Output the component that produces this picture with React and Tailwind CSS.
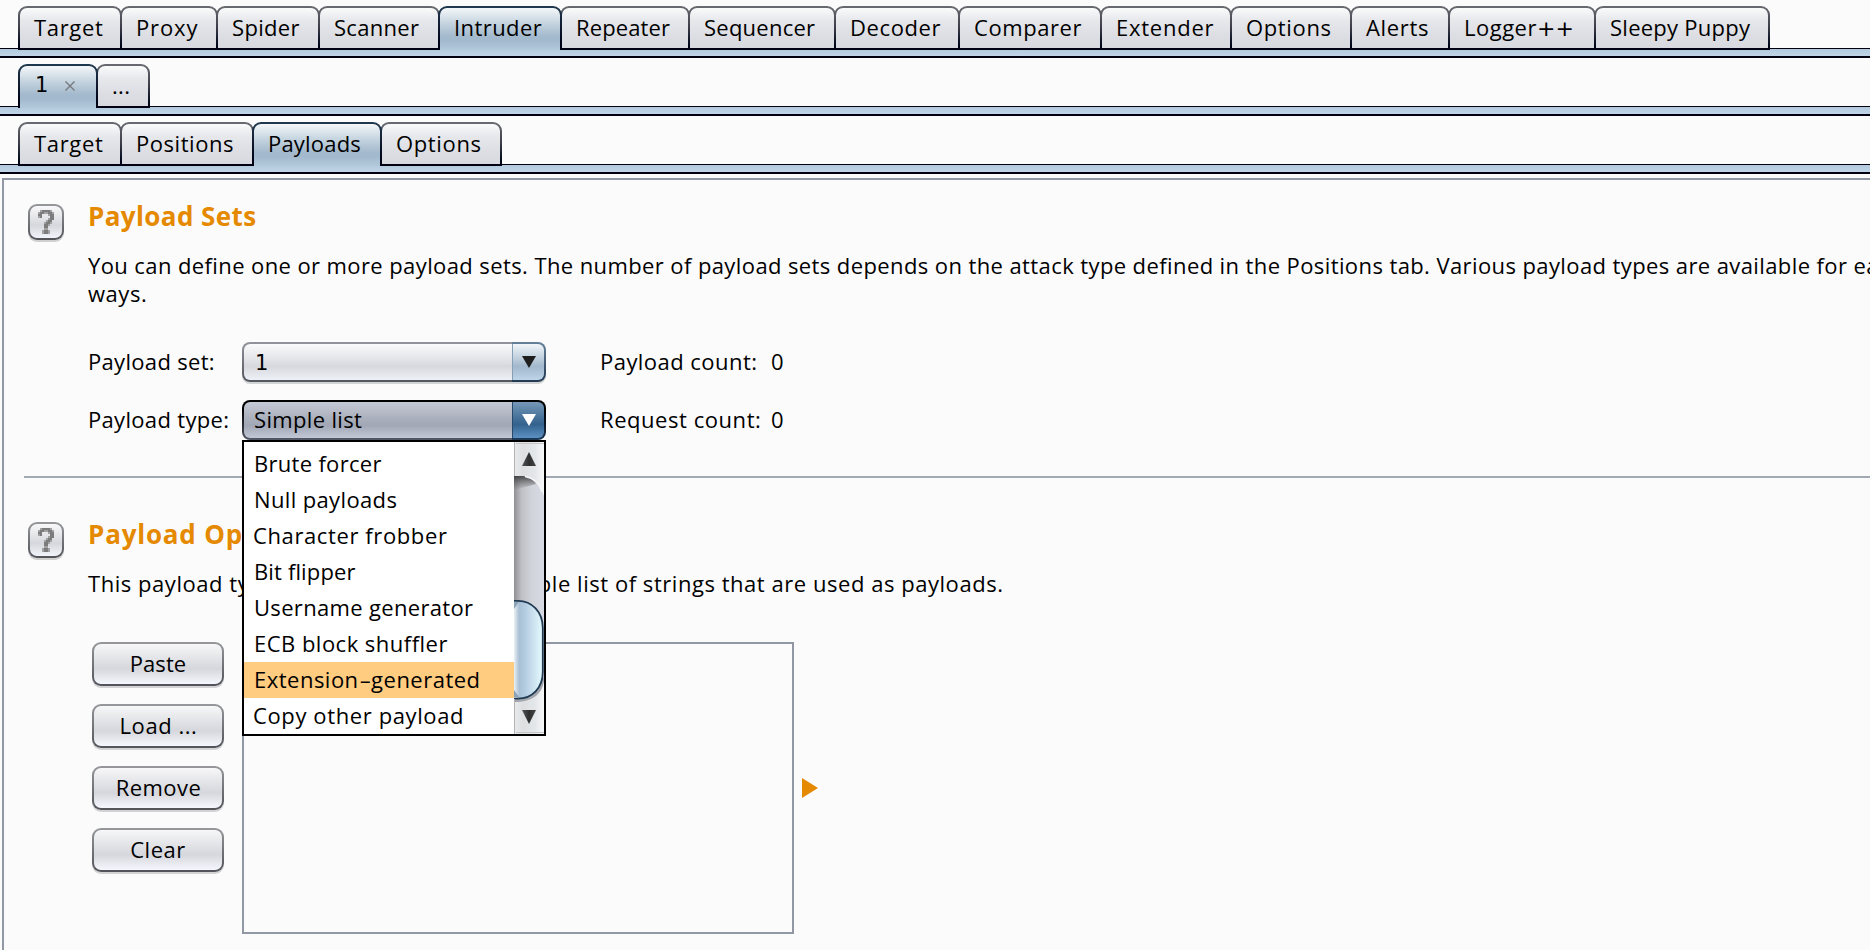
import { clsx } from "clsx";

const mainTabs = [
  { label: "Target", cls: "w-[104px] tracking-[0.67px]" },
  { label: "Proxy", cls: "w-[98px] tracking-[0.88px]" },
  { label: "Spider", cls: "w-[104px] tracking-[0.32px]" },
  { label: "Scanner", cls: "w-[122px] tracking-[0.31px]" },
  { label: "Intruder", cls: "w-[124px] tracking-[0.43px]", active: true },
  { label: "Repeater", cls: "w-[130px] tracking-[0.12px]" },
  { label: "Sequencer", cls: "w-[148px] tracking-[0.24px]" },
  { label: "Decoder", cls: "w-[126px] tracking-[0.6px]" },
  { label: "Comparer", cls: "w-[144px] tracking-[0.57px]" },
  { label: "Extender", cls: "w-[132px] tracking-[0.75px]" },
  { label: "Options", cls: "w-[122px] tracking-[0.65px]" },
  { label: "Alerts", cls: "w-[100px] tracking-[0.67px]" },
  {
    label: (
      <>
        Logger<span className="font-['DejaVu_Sans',sans-serif] tracking-normal">++</span>
      </>
    ),
    cls: "w-[148px] tracking-[0.5px]",
  },
  { label: "Sleepy Puppy", cls: "w-[176px] tracking-[0.26px]" },
];

const attackTabs = [
  {
    label: (
      <span className="flex items-center gap-[17px] pl-[1px]">
        <One />
        <svg className="mt-[2px] h-[10px] w-[10px]" viewBox="0 0 10 10">
          <path d="M0.5 0.5L9.5 9.5M9.5 0.5L0.5 9.5" stroke="#77797c" strokeWidth="1.4" />
        </svg>
      </span>
    ),
    cls: "w-[80px]",
    active: true,
  },
  { label: "...", cls: "w-[54px] tracking-[0.3px]" },
];

const sectionTabs = [
  { label: "Target", cls: "w-[104px] tracking-[0.67px]" },
  { label: "Positions", cls: "w-[134px] tracking-[0.55px]" },
  { label: "Payloads", cls: "w-[130px] tracking-[0.2px]", active: true },
  { label: "Options", cls: "w-[122px] tracking-[0.65px]" },
];

const payloadTypes = [
  { label: "Brute forcer", cls: "tracking-[0.3px]" },
  { label: "Null payloads", cls: "tracking-[0.36px]" },
  { label: "Character frobber", cls: "tracking-[0.61px] -ml-px" },
  { label: "Bit flipper", cls: "tracking-[0.14px]" },
  { label: "Username generator", cls: "tracking-[0.33px]" },
  { label: "ECB block shuffler", cls: "tracking-[0.48px]" },
  {
    label: (
      <>
        Extension<span className="inline-block w-[12.5px] scale-x-[1.7] text-center tracking-normal">-</span>generated
      </>
    ),
    cls: "tracking-[0.49px]",
    active: true,
  },
  { label: "Copy other payload", cls: "tracking-[0.61px] -ml-px" },
];

const buttons = [
  { label: "Paste", cls: "tracking-[0.05px]" },
  { label: "Load ...", cls: "tracking-[0.55px] pl-px" },
  { label: "Remove", cls: "tracking-[0.4px] pl-px" },
  { label: "Clear", cls: "tracking-[0.5px]" },
];

function One() {
  return <span className="font-['DejaVu_Sans',sans-serif] text-[21px]">1</span>;
}

function TabRow({ tabs }) {
  return (
    <div className="h-[58px] pt-[6px]">
      <div className="relative z-10 flex pl-[18px]">
        {tabs.map(({ label, cls, active }, i) => (
          <div
            key={i}
            className={clsx(
              "h-[44px] shrink-0 rounded-t-[9px] px-[2px] pt-[2px] whitespace-nowrap",
              i > 0 && "-ml-[2px]",
              active
                ? "z-10 bg-linear-to-b from-[#1f3a50] via-[#10182c] to-[#00000f]"
                : "bg-linear-to-b from-[#6a6c72] via-[#3a3b46] to-[#00000f] pb-[2px]",
              cls
            )}
          >
            <div
              className={clsx(
                "h-full rounded-t-[7px] pt-[5px] pl-[14px]",
                active
                  ? "bg-[linear-gradient(#f4f7f9,#c6d5e0_35%,#a3b9cd_68%,#a3b9cd_78%,#b2c9dc)]"
                  : "bg-[linear-gradient(#fafafb,#e7e8ec_30%,#dddee3_70%,#d8d9df)]"
              )}
            >
              {label}
            </div>
          </div>
        ))}
      </div>
      <div className="-mt-[2px] h-[10px] border-t border-b-2 border-[#00000f] bg-linear-to-b from-[#b2c9dd] to-[#c0d5e7]" />
    </div>
  );
}

const questionMark = [
  ".abbbba.",
  "abbaabba",
  "bb...abb",
  "ab....bb",
  ".....abb",
  "....abb.",
  "...abba.",
  "...bba..",
  "...bb...",
  "...aa...",
  "..abba..",
  "..abba..",
];

function HelpButton() {
  return (
    <div className="h-9 w-9 shrink-0 rounded-[9px] bg-linear-to-b from-[#96989c] to-[#515359] p-[2px] shadow-[0_2px_0_#d0d0d0]">
      <div className="flex h-full justify-center rounded-[7px] bg-[linear-gradient(#f8f8f9,#dfe0e4_45%,#d5d7dc_60%,#f2f4fb)] pt-1">
        <svg className="h-6 w-4" viewBox="0 0 8 12" shapeRendering="crispEdges">
          {questionMark.flatMap((row, y) =>
            [...row].map((c, x) =>
              c === "." ? null : (
                <rect key={`${x}-${y}`} x={x} y={y} width="1" height="1" fill={c === "b" ? "#7c7c7c" : "#a2a2a4"} />
              )
            )
          )}
        </svg>
      </div>
    </div>
  );
}

function Combo({ children, open }) {
  return (
    <div className={clsx("flex h-10 w-[304px] rounded-[8px]", !open && "shadow-[0_2px_0_#d3d4d6]")}>
      <div
        className={clsx(
          "w-[270px] rounded-l-[8px] bg-linear-to-b py-[2px] pl-[2px]",
          open ? "from-black to-[#555a68]" : "from-[#93959e] to-[#54565e]"
        )}
      >
        <div
          className={clsx(
            "h-full rounded-l-[6px] pt-[3px] pl-[10px]",
            open
              ? "bg-[linear-gradient(#c6cad6,#abb0bd_45%,#a2a7b5_65%,#c2c7d5)]"
              : "bg-[linear-gradient(#fbfbfc,#e3e4e8_42%,#d6d8dd_62%,#eff1f9)]"
          )}
        >
          {children}
        </div>
      </div>
      <div
        className={clsx(
          "w-[34px] rounded-r-[8px] bg-linear-to-b py-[2px] pr-[2px]",
          open ? "from-black to-[#1e3a57]" : "from-[#66829a] to-[#233b53]"
        )}
      >
        <div
          className={clsx(
            "flex h-full justify-center rounded-r-[6px] border-l pt-3",
            open
              ? "border-[#27496b] bg-[linear-gradient(#7698b6,#47739b_42%,#33628d_62%,#5c91c3)]"
              : "border-[#86a0b6] bg-[linear-gradient(#f2f6f9,#bccddb_42%,#a2b8cc_62%,#bdd4e9)]"
          )}
        >
          <svg className="h-3 w-[14px]" viewBox="0 0 14 12">
            <path d="M0 0H14L7 12Z" fill={open ? "#fff" : "#1f1f1f"} />
          </svg>
        </div>
      </div>
    </div>
  );
}

function ScrollBar() {
  return (
    <svg className="h-[292px] w-[30px] shrink-0" viewBox="0 0 30 292">
      <defs>
        <linearGradient id="btn">
          <stop offset="0" stopColor="#e9eaeb" />
          <stop offset="0.3" stopColor="#dddfe1" />
          <stop offset="0.7" stopColor="#e4e7ea" />
          <stop offset="1" stopColor="#f6f8f9" />
        </linearGradient>
        <linearGradient id="track">
          <stop offset="0" stopColor="#8f8f94" />
          <stop offset="0.25" stopColor="#bfc0c5" />
          <stop offset="0.6" stopColor="#d2d4dc" />
          <stop offset="1" stopColor="#d8dae4" />
        </linearGradient>
        <linearGradient id="topShade" x2="0" y2="1">
          <stop offset="0" stopColor="#333" stopOpacity="0.85" />
          <stop offset="1" stopColor="#555" stopOpacity="0" />
        </linearGradient>
        <linearGradient id="thumb">
          <stop offset="0" stopColor="#dfe9f0" />
          <stop offset="0.16" stopColor="#f0f5f8" />
          <stop offset="0.32" stopColor="#a9c0d4" />
          <stop offset="0.5" stopColor="#b5cde2" />
          <stop offset="1" stopColor="#e6fbff" />
        </linearGradient>
        <linearGradient id="arrow">
          <stop offset="0" stopColor="#555" />
          <stop offset="0.5" stopColor="#2f2f2f" />
          <stop offset="1" stopColor="#444" />
        </linearGradient>
      </defs>
      <rect width="30" height="292" fill="url(#btn)" />
      <path d="M0 34H8C20 35 27 42 29 52L30 54V240H0Z" fill="url(#track)" />
      <path d="M0 34H9C15 35 20 38 22 42L0 48Z" fill="url(#topShade)" />
      <path d="M11 34.5C20 36 26 42 28 50" fill="none" stroke="#f4f5f6" strokeWidth="1.5" />
      <path d="M0 236H30C30 252 18 259 4 260H0Z" fill="#a3a7ad" />
      <path
        d="M-6 158.8H4C18 158.8 28.8 170 28.8 186V230C28.8 246 18 256.6 4 256.6H-6Z"
        fill="url(#thumb)"
        stroke="#203a52"
        strokeWidth="1.8"
      />
      <path d="M0 160H5L0 167ZM0 255H5L0 248Z" fill="#8ba3b8" />
      <path d="M0.5 0V34M0.5 257V292" stroke="#b4b4b4" />
      <path d="M2 1.5H30M2 290.5H30" stroke="#c4c6c8" />
      <path d="M15 10L22 24H8Z" fill="url(#arrow)" />
      <path d="M8 268H22L15 282Z" fill="url(#arrow)" />
    </svg>
  );
}

function Popup() {
  return (
    <div className="absolute top-10 left-0 z-20 flex h-[296px] w-[304px] border-2 border-black bg-white">
      <div className="flex-1 pt-1">
        {payloadTypes.map(({ label, cls, active }, i) => (
          <div key={i} className={clsx("h-9 pt-[3px] pl-[10px] whitespace-nowrap", active && "bg-[#ffcc80]")}>
            <div className={cls}>{label}</div>
          </div>
        ))}
      </div>
      <ScrollBar />
    </div>
  );
}

const titleCls = "text-[26px] leading-9 font-bold text-[#e58900]";

export default function App() {
  return (
    <div className="flex h-[950px] w-[1870px] flex-col overflow-hidden bg-[#fbfbfb] font-['Open_Sans','Noto_Sans',sans-serif] text-[22px] leading-7 text-black">
      <TabRow tabs={mainTabs} />
      <TabRow tabs={attackTabs} />
      <TabRow tabs={sectionTabs} />
      <main className="mt-1 ml-[2px] flex-1 border-t-2 border-l-2 border-[#9297a4]">
        <section className="flex gap-6 pl-6">
          <div className="pt-6">
            <HelpButton />
          </div>
          <div className="pt-[18px] whitespace-nowrap">
            <h2 className={clsx(titleCls, "tracking-[0.4px]")}>Payload Sets</h2>
            <p className="mt-[17px] tracking-[0.4px]">
              You can define one or more payload sets. The number of payload sets depends on the attack type defined in
              the Positions tab. Various payload types are available for each payload set, and each payload type can be
              customized in different
              <br />
              <span className="tracking-[0.55px]">ways.</span>
            </p>
            <div className="mt-[35px] flex flex-col gap-[18px] tracking-[0.32px]">
              <div className="flex h-10">
                <div className="w-[154px] pt-[5px]">Payload set:</div>
                <Combo>
                  <span className="pl-[1px]">
                    <One />
                  </span>
                </Combo>
                <div className="ml-[54px] w-[171px] pt-[5px] tracking-[0.46px]">Payload count:</div>
                <div className="pt-[5px]">0</div>
              </div>
              <div className="flex h-10">
                <div className="w-[154px] pt-[5px]">Payload type:</div>
                <div className="relative">
                  <Combo open>
                    <span className="tracking-[0.33px]">Simple list</span>
                  </Combo>
                  <Popup />
                </div>
                <div className="ml-[54px] w-[171px] pt-[5px] tracking-[0.55px]">Request count:</div>
                <div className="pt-[5px]">0</div>
              </div>
            </div>
          </div>
        </section>
        <div className="mt-9 ml-5 h-[2px] bg-[#a3a9b1]" />
        <section className="flex gap-6 pl-6">
          <div className="pt-11">
            <HelpButton />
          </div>
          <div className="pt-[38px] whitespace-nowrap">
            <h2 className={clsx(titleCls, "tracking-[0.8px]")}>Payload Options [Simple list]</h2>
            <p className="mt-[17px] tracking-[0.54px]">
              This payload type lets you configure a simple list of strings that are used as payloads.
            </p>
            <div className="mt-[45px] flex">
              <div className="ml-1 flex w-[150px] flex-col gap-[18px]">
                {buttons.map(({ label, cls }) => (
                  <button
                    key={label}
                    className="h-11 w-[132px] rounded-[9px] bg-linear-to-b from-[#96989c] to-[#515359] p-[2px] shadow-[0_2px_0_#d3d3d5]"
                  >
                    <span
                      className={clsx(
                        "block h-full rounded-[7px] bg-[linear-gradient(#f7f7f8,#e0e1e5_42%,#d5d7dc_62%,#f5f7fe)] pt-[5px]",
                        cls
                      )}
                    >
                      {label}
                    </span>
                  </button>
                ))}
              </div>
              <div className="h-[292px] w-[552px] border-2 border-[#9297a4]" />
              <svg className="mt-[136px] ml-2 h-5 w-4" viewBox="0 0 16 20">
                <path d="M0 0L16 10L0 20Z" fill="#e58900" />
              </svg>
            </div>
          </div>
        </section>
      </main>
    </div>
  );
}
